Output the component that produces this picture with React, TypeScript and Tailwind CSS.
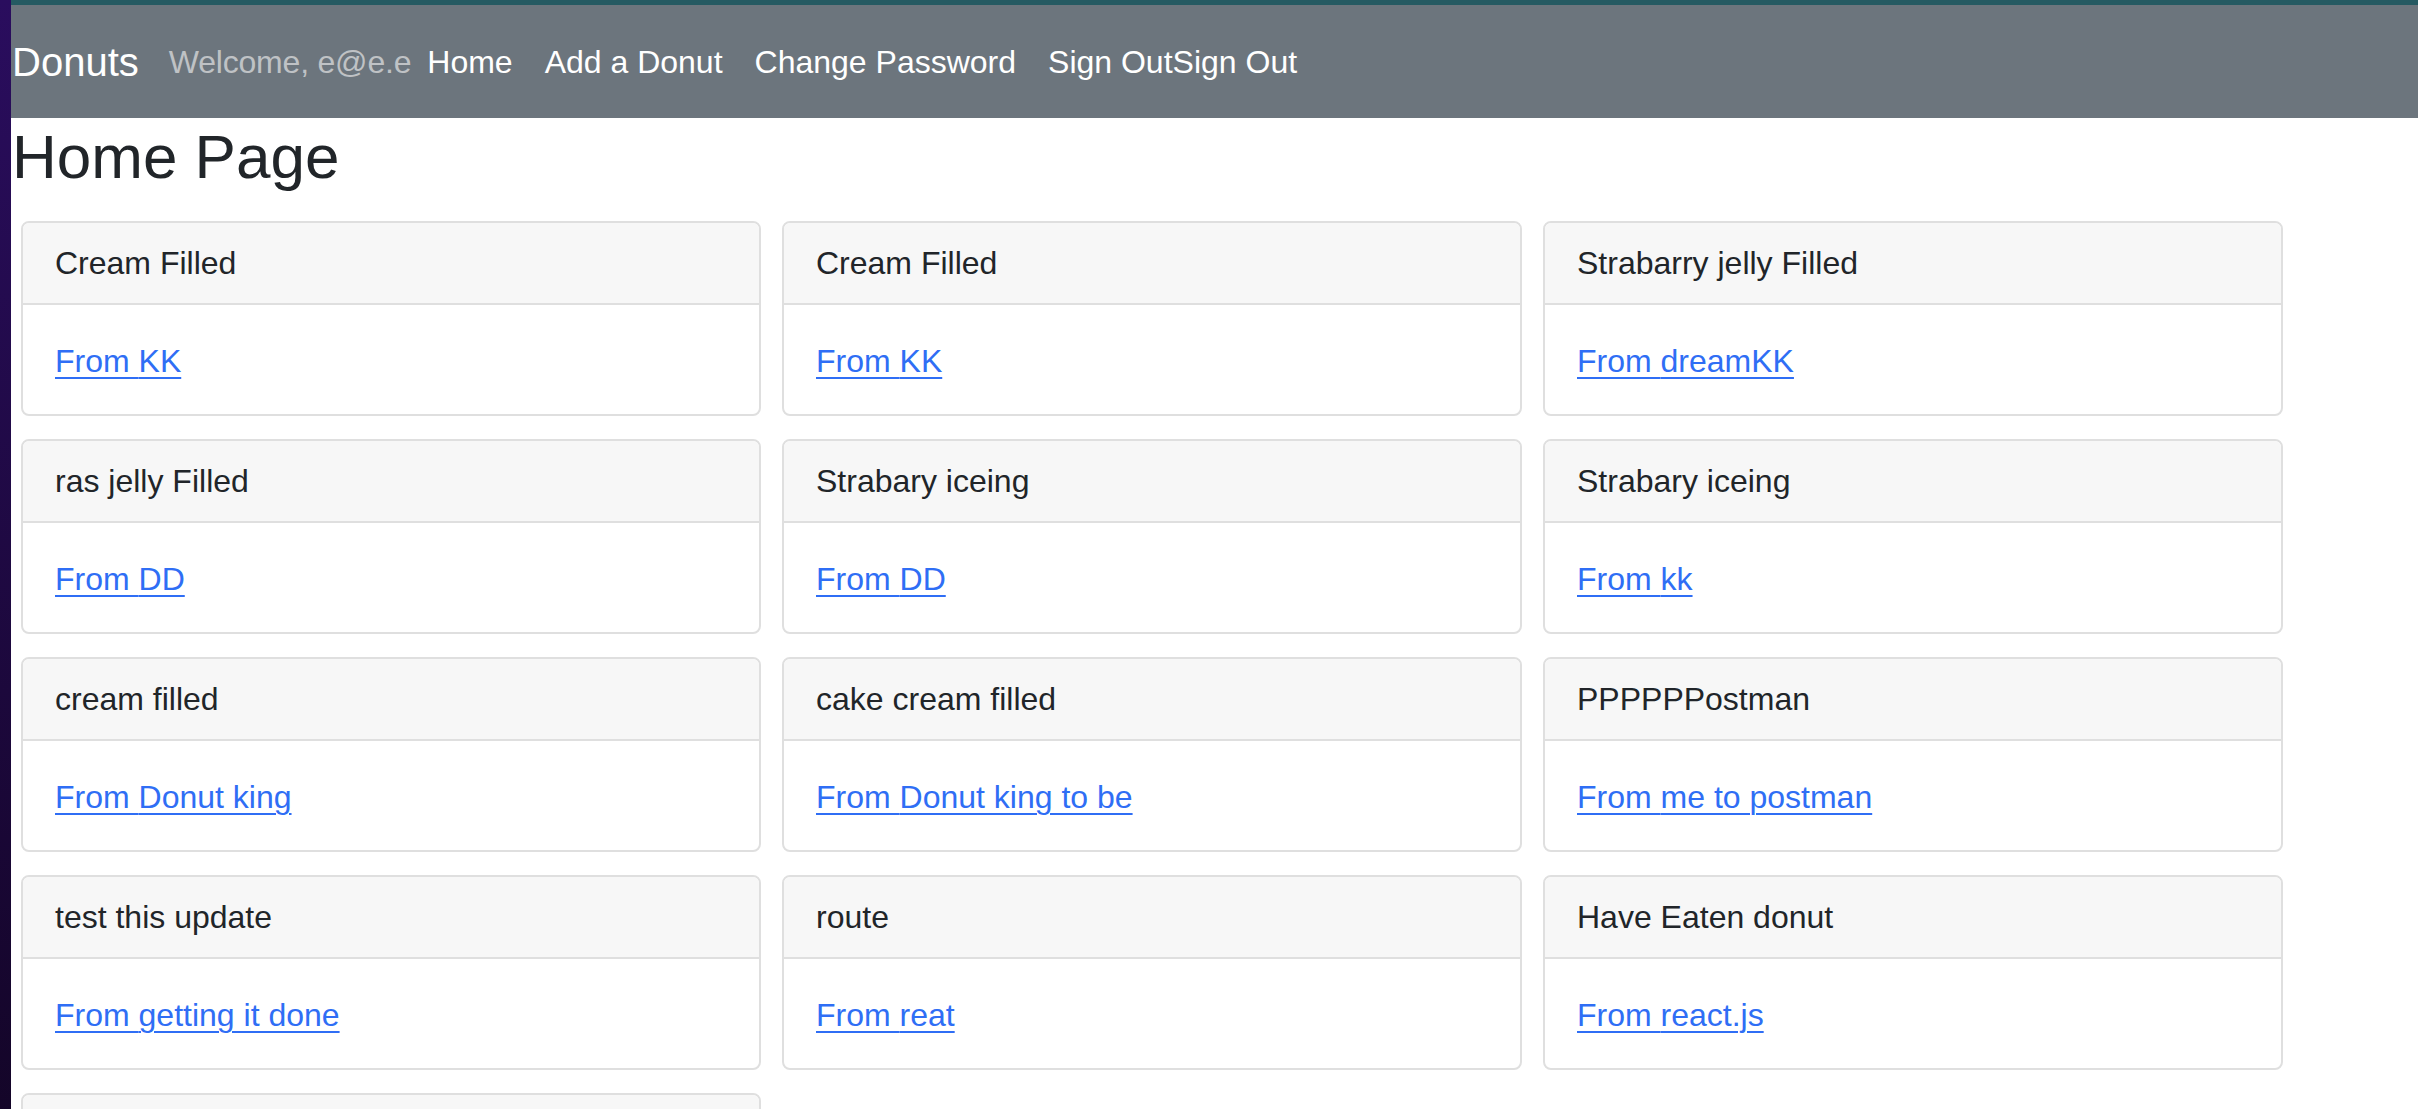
import React from 'react';

interface Donut {
  name: string;
  from: string;
}

const donuts: Donut[] = [
  { name: 'Cream Filled', from: 'KK' },
  { name: 'Cream Filled', from: 'KK' },
  { name: 'Strabarry jelly Filled', from: 'dreamKK' },
  { name: 'ras jelly Filled', from: 'DD' },
  { name: 'Strabary iceing', from: 'DD' },
  { name: 'Strabary iceing', from: 'kk' },
  { name: 'cream filled', from: 'Donut king' },
  { name: 'cake cream filled', from: 'Donut king to be' },
  { name: 'PPPPPPostman', from: 'me to postman' },
  { name: 'test this update', from: 'getting it done' },
  { name: 'route', from: 'reat' },
  { name: 'Have Eaten donut', from: 'react.js' },
];

const DonutCard: React.FC<{ donut?: Donut }> = ({ donut }) => (
  <div className="border-2 border-[#dfdfdf] rounded-[8px] overflow-hidden bg-white">
    <div className="bg-[#f7f7f7] border-b-2 border-[#dfdfdf] px-[32px] py-[16px] text-[32px] leading-[48px] text-[#212529]">
      {donut ? donut.name : '\u00a0'}
    </div>
    <div className="px-[32px] pt-[32px] pb-[29px] text-[32px] leading-[48px]">
      {donut ? (
        <a href="#" className="text-[#2f6ef5] underline decoration-[2px] underline-offset-[5px]">
          From {donut.from}
        </a>
      ) : (
        '\u00a0'
      )}
    </div>
  </div>
);

const App: React.FC = () => {
  return (
    <div className="flex min-h-screen bg-white font-['Liberation_Sans',Arial,sans-serif]">
      <div className="w-[11px] shrink-0 bg-gradient-to-b from-[#2a0d5e] to-[#10041f]"></div>

      <div className="flex-1 min-w-0">
        <div className="h-[5px] bg-[#255a62]"></div>

        <nav className="h-[113px] bg-[#6c757d] flex items-center pl-[1px]">
          <span className="text-[40px] leading-[60px] text-white mr-[30px]">Donuts</span>
          <span className="text-[32px] leading-[48px] text-[#bfc2c5] tracking-[-0.2px]">Welcome, e@e.e</span>
          <a href="#" className="px-[16px] text-[32px] leading-[48px] text-white">Home</a>
          <a href="#" className="px-[16px] text-[32px] leading-[48px] text-white">Add a Donut</a>
          <a href="#" className="px-[16px] text-[32px] leading-[48px] text-white">Change Password</a>
          <a href="#" className="px-[16px] text-[32px] leading-[48px] text-white">Sign OutSign Out</a>
        </nav>

        <h1 className="pl-[1px] pt-[2px] text-[62px] leading-[74px] font-normal text-[#212529]">Home Page</h1>

        <div className="grid grid-cols-[repeat(3,740px)] gap-x-[21px] gap-y-[23px] pl-[10px] pt-[27px] pb-[40px]">
          {donuts.map((d, i) => (
            <DonutCard key={i} donut={d} />
          ))}
          <DonutCard />
        </div>
      </div>
    </div>
  );
};

export default App;
